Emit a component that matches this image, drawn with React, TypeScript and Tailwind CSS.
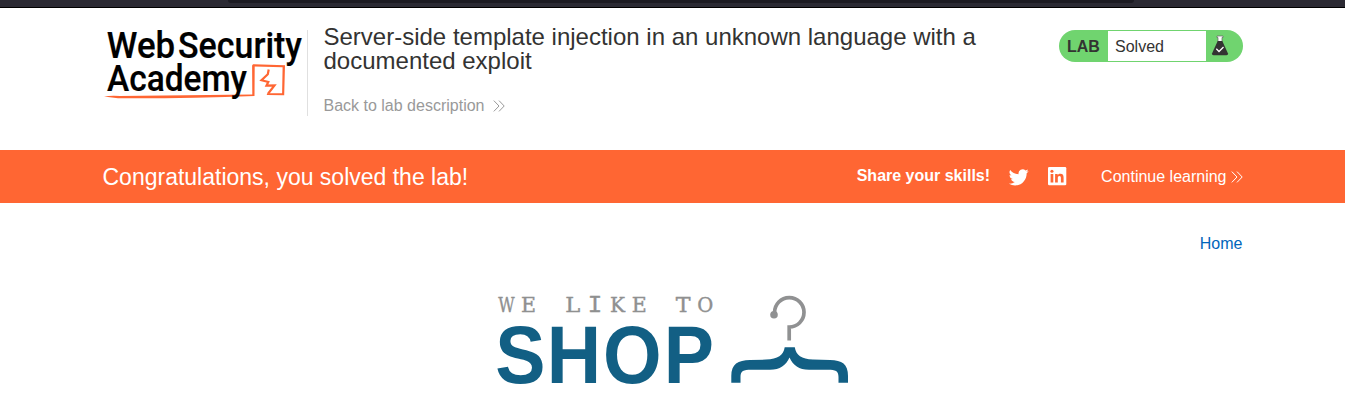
import React from "react";

const tagline: { ch: string; x: number; w: number; mono?: boolean }[] = [
  { ch: "W", x: 0, w: 16.4 },
  { ch: "E", x: 22.8, w: 15 },
  { ch: "L", x: 67, w: 15 },
  { ch: "I", x: 89.5, w: 14.5, mono: true },
  { ch: "K", x: 111.8, w: 15 },
  { ch: "E", x: 133.4, w: 15 },
  { ch: "T", x: 177.5, w: 14.8 },
  { ch: "O", x: 199, w: 16 },
];

function Chevrons({ className }: { className: string }) {
  return (
    <svg className={className} width="12" height="12" viewBox="0 0 12 12" fill="none" stroke="currentColor" strokeWidth="1">
      <path d="M0.8 0.6 6 6 0.8 11.4M6 0.6 11.2 6 6 11.4" />
    </svg>
  );
}

function AcademyLogo() {
  return (
    <svg className="block shrink-0 overflow-visible" width="204" height="85" viewBox="103 30 204 85">
      <g fill="#000" stroke="#000" strokeWidth="0.2" fontFamily="Roboto, 'Liberation Sans', sans-serif" fontWeight="500" fontSize="36.8">
        <text x="106.8" y="58.2" textLength="68.3" lengthAdjust="spacingAndGlyphs">Web</text>
        <text x="178" y="58.2" textLength="124" lengthAdjust="spacingAndGlyphs">Security</text>
      </g>
      <path d="M104 96.6Q110 95.4 120 96L252.3 94.4 252.1 65.5 253 64.2 285 65.2 284.2 95.3 266.8 95 267 93.2 282.1 93.3 282.6 67.2 254.7 66.6 254.5 95.9Q190 98.5 118 98.2Z" fill="#ff6633" />
      <path d="M268.7 69.5 267.8 74.3 261.5 80.2 268.3 82 266.5 85.5 274.5 85.3 268.2 93.5" fill="none" stroke="#ff6633" strokeWidth="2.2" />
      <text x="107" y="90.7" fill="#000" stroke="#000" strokeWidth="0.2" fontFamily="Roboto, 'Liberation Sans', sans-serif" fontWeight="500" fontSize="36.8" textLength="140" lengthAdjust="spacingAndGlyphs">Academy</text>
    </svg>
  );
}

function Flask() {
  return (
    <svg width="18" height="22" viewBox="0 0 18 22">
      <path d="M6 1H12V2.5H11V8H7V2.5H6Z" fill="#fff" stroke="#666" strokeWidth=".7" />
      <path d="M6.7 6H11.3L17 18.5Q17.3 20.3 15.5 20.3H2.5Q.7 20.3 1 18.5Z" fill="#333332" />
      <path d="M5.3 13.8 8 16.5 12.5 12" fill="none" stroke="#fff" strokeWidth="1.3" />
    </svg>
  );
}

function ShopLogo() {
  return (
    <svg className="block overflow-visible" width="352" height="92" viewBox="498 294 352 92">
      <g fill="#8f9090" stroke="#8f9090" strokeWidth="0.4" fontSize="20.5">
        {tagline.map((l, i) => (
          <text
            key={i}
            x={498.3 + l.x}
            y="311.6"
            fontFamily={l.mono ? "'Liberation Mono', monospace" : "'DejaVu Serif', serif"}
            fontSize={l.mono ? 23 : 20.5}
            textLength={l.w}
            lengthAdjust="spacingAndGlyphs"
          >
            {l.ch}
          </text>
        ))}
      </g>
      <text transform="scale(.93 1)" x="532.6 588 648.4 713.8" y="382.8" fill="#125f84" fontFamily="'Liberation Sans', Arial, sans-serif" fontWeight="700" fontSize="81">SHOP</text>
      <circle cx="774" cy="314.7" r="3.8" fill="#909192" />
      <path d="M774.6 314V312.5A14.7 14.7 0 1 1 789.2 327V340.5" fill="none" stroke="#909192" strokeWidth="3.7" />
      <path d="M731.3 382.8V376C731.3 364 738 360.3 750 360L766 359.6C778 359 783.5 355 784.7 347.2H794.8C796 355 801.5 359 813 359.6L830 360C842 360.3 848 364 848 376V382.8H838.5V377C838.5 371 835.5 369.8 828 369.8H809C799 369.5 793 365.5 789.5 357.5C786 365.5 780 369.5 770 369.8H751C743.5 369.8 740.5 371 740.5 377V382.8Z" fill="#125f84" />
    </svg>
  );
}

export default function App() {
  return (
    <div className="flex h-[407px] flex-col overflow-hidden bg-white font-['Liberation_Sans',Arial,sans-serif] text-[#333332]">
      <div className="flex h-2 shrink-0 justify-center border-b border-black bg-[#2b2a33]">
        <div className="ml-[17px] h-[3px] w-[906px] rounded-b-[3px] bg-[#1c1b22]" />
      </div>
      <header className="flex h-[142px] shrink-0 items-start pl-[103px] pr-[102px] pt-[22px]">
        <AcademyLogo />
        <div className="h-[86px] border-l border-[#e0e0e0] pl-[15.5px]">
          <h1 className="mt-[-5px] w-[690px] text-[24px] leading-[24px]">
            Server-side template injection in an unknown language with a documented exploit
          </h1>
          <a className="mt-6 flex items-center text-[16px] leading-[18px] text-[#999]">
            Back to lab description
            <Chevrons className="mb-px ml-[9px]" />
          </a>
        </div>
        <div className="ml-auto flex h-8 w-[184px] items-center overflow-hidden rounded-full bg-[#70d46f]">
          <span className="w-[49px] pl-2 pt-[2px] text-[16px] font-bold leading-5">LAB</span>
          <span className="h-[30px] w-[98px] bg-white pl-[7px] text-[16px] leading-[31px]">Solved</span>
          <span className="pl-[5px]"><Flask /></span>
        </div>
      </header>
      <section className="flex h-[53px] shrink-0 items-center bg-[#ff6633] pl-[102.5px] pr-[102px] text-white">
        <h2 className="text-[23px] leading-[28px]">Congratulations, you solved the lab!</h2>
        <b className="ml-auto pb-[2px] text-[16px] leading-5">Share your skills!</b>
        <svg className="ml-[19px]" width="20" height="20" viewBox="0 0 24 24" fill="currentColor">
          <path d="M23.6 4.9a9.7 9.7 0 0 1-2.8.8 4.9 4.9 0 0 0 2.1-2.7 9.7 9.7 0 0 1-3.1 1.2 4.9 4.9 0 0 0-8.3 4.4A13.8 13.8 0 0 1 1.4 3.6a4.9 4.9 0 0 0 1.5 6.5 4.8 4.8 0 0 1-2.2-.6v.1a4.9 4.9 0 0 0 3.9 4.8 4.9 4.9 0 0 1-2.2.1 4.9 4.9 0 0 0 4.6 3.4A9.8 9.8 0 0 1-.2 19.9a13.8 13.8 0 0 0 7.5 2.2c9 0 14-7.6 13.9-14.6a9.7 9.7 0 0 0 2.4-2.6z" />
        </svg>
        <svg className="mb-px ml-[17.5px]" width="20" height="20" viewBox="0 0 20 20">
          <rect x="1" y="1" width="18.3" height="18.3" rx="1.3" fill="#fff" />
          <path d="M3.6 8H6.3V16.5H3.6ZM8.1 8H10.7V9.2C11.3 8.3 12.2 7.8 13.4 7.8C15.9 7.8 16.6 9.4 16.6 11.8V16.5H13.9V12.3C13.9 11.1 13.7 10.1 12.5 10.1S10.8 11 10.8 12.2V16.5H8.1Z" fill="#ff6633" />
          <circle cx="4.95" cy="5.2" r="1.55" fill="#ff6633" />
        </svg>
        <a className="ml-[34.5px] flex items-center text-[16px] leading-5">
          Continue learning
          <Chevrons className="ml-[4.5px]" />
        </a>
      </section>
      <nav className="flex shrink-0 justify-end pr-[102.5px] pt-8 text-[16px] leading-[18px] text-[#0066bb]">
        <a>Home</a>
      </nav>
      <main className="flex pl-[498px] pt-[41px]">
        <ShopLogo />
      </main>
    </div>
  );
}
